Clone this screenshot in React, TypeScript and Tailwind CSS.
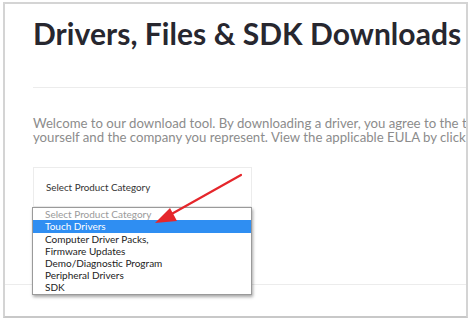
import React from 'react';

const options = [
  'Touch Drivers',
  'Computer Driver Packs,',
  'Firmware Updates',
  'Demo/Diagnostic Program',
  'Peripheral Drivers',
  'SDK',
];

const Arrow: React.FC = () => (
  <svg className="absolute left-0 top-0 pointer-events-none" width="474" height="321" viewBox="0 0 474 321">
    <line x1="241" y1="175" x2="168" y2="216" stroke="#e5262b" strokeWidth="2.2" strokeLinecap="round" />
    <polygon points="155,223 170,208 177,221" fill="#e5262b" />
  </svg>
);

const App: React.FC = () => {
  return (
    <div className="relative w-[474px] h-[321px] bg-white overflow-hidden" style={{ fontFamily: 'Lato, "Noto Sans", sans-serif' }}>
      <div className="absolute left-[3px] top-[2px] w-[465px] h-[316px] border-2 border-[#d4d4d4] border-b-[#c8c8c8] overflow-hidden bg-white">
        <div className="pl-[28px] pt-[9px]">
          <h1 className="text-[30px] leading-[40px] font-bold text-[#27272f] whitespace-nowrap tracking-[0.05px]">
            Drivers, Files &amp; SDK Downloads
          </h1>
          <div className="mt-[34px] h-px bg-[#ececec]" />
          <p className="mt-[28px] text-[13.2px] leading-[14px] text-[#8c8c8c] whitespace-nowrap">
            <span className="block">Welcome to our download tool. By downloading a driver, you agree to the terms</span>
            <span className="block">yourself and the company you represent. View the applicable EULA by clicking</span>
          </p>
          <div className="mt-[23px] w-[219px] h-[40px] border border-[#ececec] flex items-center pl-[12px] text-[9.8px] text-[#333]">
            Select Product Category
          </div>
        </div>
        <div className="mt-[77px] h-px bg-[#ececec]" />
        <div className="absolute left-[27px] top-[203px] w-[220px] border border-[#9a9a9a] bg-white shadow-[1px_2px_3px_rgba(0,0,0,0.35)] py-px">
          <div className="h-[11px] leading-[11px] pl-[12px] text-[10px] text-[#9a9a9a]">Select Product Category</div>
          {options.map((o, i) => (
            <div
              key={o}
              className={
                i === 0
                  ? 'h-[13px] leading-[13px] pl-[12px] text-[10px] bg-[#2f8ef2] text-white'
                  : 'h-[12px] leading-[12px] pl-[12px] text-[10px] text-[#222]'
              }
            >
              {o}
            </div>
          ))}
        </div>
      </div>
      <Arrow />
    </div>
  );
};

export default App;
